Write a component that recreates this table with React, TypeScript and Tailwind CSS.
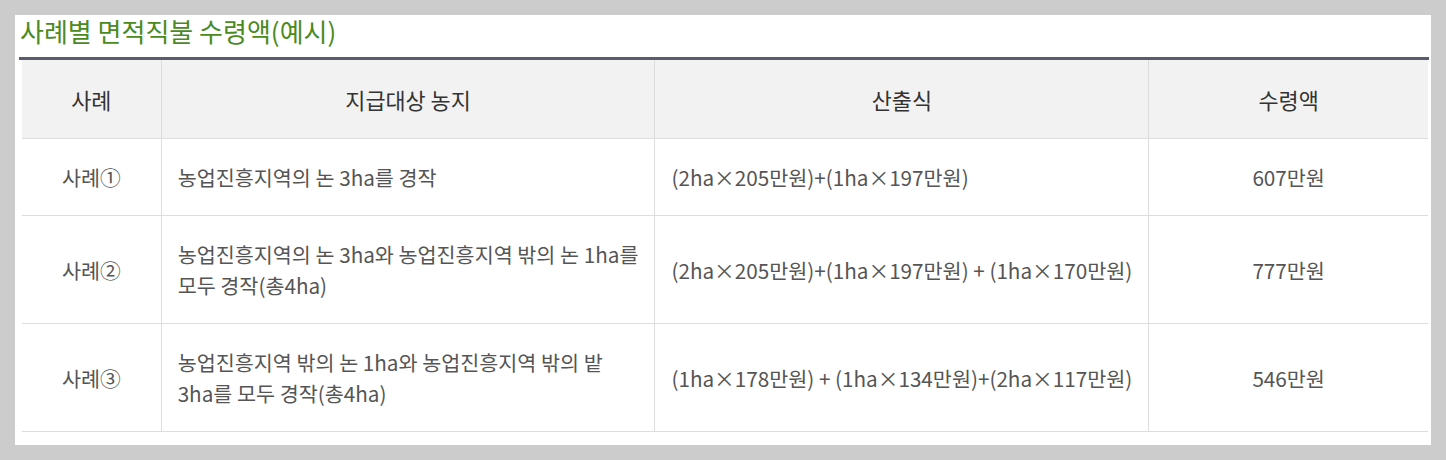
const font = { fontFamily: '"Noto Sans CJK KR", "Noto Sans", sans-serif' };

type Row = { name: string; land: string[]; formula: string; amount: string };

const rows: Row[] = [
  {
    name: "사례①",
    land: ["농업진흥지역의 논 3ha를 경작"],
    formula: "(2ha×205만원)+(1ha×197만원)",
    amount: "607만원",
  },
  {
    name: "사례②",
    land: ["농업진흥지역의 논 3ha와 농업진흥지역 밖의 논 1ha를", "모두 경작(총4ha)"],
    formula: "(2ha×205만원)+(1ha×197만원) + (1ha×170만원)",
    amount: "777만원",
  },
  {
    name: "사례③",
    land: ["농업진흥지역 밖의 논 1ha와 농업진흥지역 밖의 밭", "3ha를 모두 경작(총4ha)"],
    formula: "(1ha×178만원) + (1ha×134만원)+(2ha×117만원)",
    amount: "546만원",
  },
];

export default function App() {
  return (
    <div className="w-[1446px] h-[460px] bg-[#cccccc] p-[15px]" style={font}>
      <div className="w-[1416px] h-[430px] bg-white px-[4px]">
        {/* title */}
        <h2 className="text-[26px] leading-[32px] text-[#4b8a1e] pl-[1px] whitespace-nowrap">사례별 면적직불 수령액(예시)</h2>

        <div className="mt-[10px] border-t-[3px] border-t-[#595c6d] w-[1410px]">
          <table className="ml-[3px] w-[1406px] border-collapse text-[20.7px] leading-[31px]">
            <colgroup>
              <col className="w-[140px]" />
              <col className="w-[492px]" />
              <col className="w-[493px]" />
              <col className="w-[281px]" />
            </colgroup>
            <thead>
              <tr className="bg-[#f2f2f2] text-[#333] text-[21.85px]">
                <th className="font-normal pt-[24px] pb-[23px] border-b border-[#dddddd]">사례</th>
                <th className="font-normal pt-[24px] pb-[23px] border-b border-l border-[#dddddd]">지급대상 농지</th>
                <th className="font-normal pt-[24px] pb-[23px] border-b border-l border-[#dddddd]">산출식</th>
                <th className="font-normal pt-[24px] pb-[23px] border-b border-l border-[#dddddd]">수령액</th>
              </tr>
            </thead>
            <tbody className="text-[#555]">
              {rows.map((r) => (
                <tr key={r.name}>
                  <td className="text-center pt-[23px] pb-[22px] border-b border-[#dddddd]">{r.name}</td>
                  <td className="px-[16px] pt-[23px] pb-[22px] border-b border-l border-[#dddddd] whitespace-nowrap">
                    {r.land.map((l) => (
                      <div key={l}>{l}</div>
                    ))}
                  </td>
                  <td className="px-[16px] pt-[23px] pb-[22px] border-b border-l border-[#dddddd] whitespace-nowrap">
                    {r.formula}
                  </td>
                  <td className="text-center pt-[23px] pb-[22px] border-b border-l border-[#dddddd]">{r.amount}</td>
                </tr>
              ))}
            </tbody>
          </table>
        </div>
      </div>
    </div>
  );
}
